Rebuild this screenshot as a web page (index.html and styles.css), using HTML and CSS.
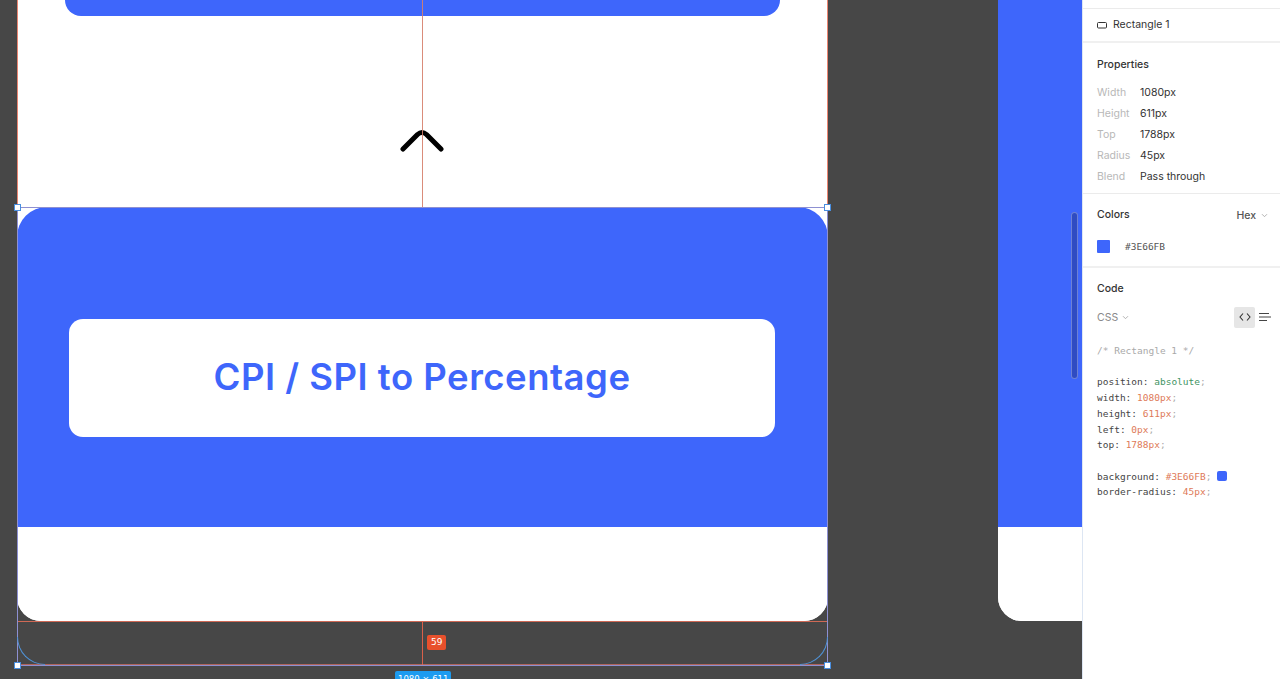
FILE: index.html
```html
<!DOCTYPE html>
<html lang="en">
<head>
<meta charset="utf-8">
<title>CPI / SPI to Percentage – Inspect</title>
<link rel="stylesheet" href="styles.css">
</head>
<body>
<div class="app">
  <main class="canvas">
    <section class="frame">
      <div class="top-btn"></div>
      <div class="chevron-zone">
        <svg class="chevron" width="50" height="30" viewBox="0 0 50 30"><path d="M6 21 L20.5 6.5 Q25 2.5 29.5 6.5 L44 21" fill="none" stroke="#000" stroke-width="5" stroke-linecap="round" stroke-linejoin="round"/></svg>
      </div>
      <div class="hero">
        <div class="hero-card"><h1 class="hero-title">CPI / SPI to Percentage</h1></div>
      </div>
      <div class="frame-rest"></div>
    </section>

    <section class="frame frame-two">
      <div class="frame-two-blue"></div>
      <div class="frame-rest"></div>
    </section>

    <div class="frame-outline"></div>
    <div class="guide-v guide-top"></div>
    <div class="guide-v guide-bottom"></div>
    <div class="guide-h"></div>
    <div class="selection"></div>
    <div class="arc arc-left"></div>
    <div class="arc arc-right"></div>
    <span class="handle h-tl"></span>
    <span class="handle h-tr"></span>
    <span class="handle h-bl"></span>
    <span class="handle h-br"></span>
    <span class="badge-measure">59</span>
    <span class="badge-size">1080 × 611</span>
    <div class="scrollbar"></div>
  </main>

  <aside class="panel">
    <div class="panel-cap"></div>
    <div class="layer-row">
      <svg width="10" height="8" viewBox="0 0 10 8"><rect x="0.5" y="1.5" width="9" height="5.5" rx="1" fill="none" stroke="#333" stroke-width="1"/></svg>
      <span>Rectangle 1</span>
    </div>

    <div class="section props">
      <div class="sec-title">Properties</div>
      <div class="prop"><span class="k">Width</span><span class="v">1080px</span></div>
      <div class="prop"><span class="k">Height</span><span class="v">611px</span></div>
      <div class="prop"><span class="k">Top</span><span class="v">1788px</span></div>
      <div class="prop"><span class="k">Radius</span><span class="v">45px</span></div>
      <div class="prop"><span class="k">Blend</span><span class="v">Pass through</span></div>
    </div>

    <div class="section colors">
      <div class="sec-head">
        <span class="sec-title">Colors</span>
        <span class="hex-pick">Hex <svg width="7" height="5" viewBox="0 0 7 5"><path d="M1 1.2 L3.5 3.7 L6 1.2" fill="none" stroke="#aaa" stroke-width="0.9"/></svg></span>
      </div>
      <div class="color-row"><span class="swatch"></span><span class="mono">#3E66FB</span></div>
    </div>

    <div class="section code">
      <div class="sec-title">Code</div>
      <div class="code-bar">
        <span class="lang">CSS <svg width="7" height="5" viewBox="0 0 7 5"><path d="M1 1.2 L3.5 3.7 L6 1.2" fill="none" stroke="#aaa" stroke-width="0.9"/></svg></span>
        <span class="code-tools">
          <span class="tool-btn"><svg width="12" height="10" viewBox="0 0 12 10"><path d="M4 1.5 L1 5 L4 8.5 M8 1.5 L11 5 L8 8.5" fill="none" stroke="#333" stroke-width="1.1"/></svg></span>
          <span class="tool-lines"><svg width="12" height="10" viewBox="0 0 12 10"><path d="M0 1.5 H10 M0 5 H12 M0 8.5 H8" stroke="#444" stroke-width="1"/></svg></span>
        </span>
      </div>
      <pre class="code-block"><span class="c-com">/* Rectangle 1 */</span>

<span class="c-k">position</span>: <span class="c-s">absolute</span><span class="c-p">;</span>
<span class="c-k">width</span>: <span class="c-n">1080px</span><span class="c-p">;</span>
<span class="c-k">height</span>: <span class="c-n">611px</span><span class="c-p">;</span>
<span class="c-k">left</span>: <span class="c-n">0px</span><span class="c-p">;</span>
<span class="c-k">top</span>: <span class="c-n">1788px</span><span class="c-p">;</span>

<span class="c-k">background</span>: <span class="c-n">#3E66FB</span><span class="c-p">;</span> <span class="mini-swatch"></span>
<span class="c-k">border-radius</span>: <span class="c-n">45px</span><span class="c-p">;</span></pre>
    </div>
  </aside>
</div>
</body>
</html>
```

FILE: styles.css
```css
* { box-sizing: border-box; }
html, body { margin: 0; padding: 0; }
body {
  width: 1280px;
  height: 679px;
  overflow: hidden;
  background: #474747;
  font-family: Inter, "Noto Sans", Arial, sans-serif;
}
.app {
  display: flex;
  width: 1280px;
  height: 679px;
}

/* ---------- canvas ---------- */
.canvas {
  position: relative;
  flex: 0 0 1082px;
  height: 679px;
  background: #474747;
  overflow: hidden;
}
.frame {
  position: absolute;
  left: 17px;
  top: 0;
  width: 811px;
  height: 621px;
  display: flex;
  flex-direction: column;
  background: #fff;
  border-radius: 0 0 24px 24px;
  overflow: hidden;
}
.top-btn {
  flex: 0 0 16px;
  margin: 0 48px 0 48px;
  background: #3E66FB;
  border-radius: 0 0 17px 17px;
}
.chevron-zone {
  flex: 0 0 191px;
  display: flex;
  justify-content: center;
  padding-top: 112px;
}
.chevron { display: block; margin-left: -1px; }
.hero {
  flex: 0 0 320px;
  background: #3E66FB;
  border-radius: 30px 30px 0 0;
  padding: 112px 53px 0 52px;
}
.hero-card {
  height: 118px;
  background: #fff;
  border-radius: 14px;
  display: flex;
  align-items: center;
  justify-content: center;
}
.hero-title {
  margin: 0 0 3px 0;
  font-family: Inter, "Noto Sans", sans-serif;
  font-weight: 600;
  font-size: 36.5px;
  letter-spacing: 0.5px;
  color: #3E66FB;
}
.frame-rest { flex: 1 1 auto; background: #fff; }

.frame-two {
  left: 998px;
  width: 160px;
  border-radius: 0 0 24px 24px;
}
.frame-two-blue { flex: 0 0 527px; background: #3E66FB; }

/* overlays */
.frame-outline {
  position: absolute;
  left: 17px;
  top: -2px;
  width: 811px;
  height: 624px;
  border: 1px solid rgba(232, 112, 88, 0.85);
  pointer-events: none;
}
.guide-v {
  position: absolute;
  left: 422px;
  width: 1px;
  background: rgba(214, 128, 108, 0.9);
}
.guide-top { top: 0; height: 207px; }
.guide-bottom { top: 621px; height: 44px; background: #d9604a; }
.guide-h {
  position: absolute;
  left: 17px;
  top: 664px;
  width: 811px;
  height: 1px;
  background: rgba(210, 110, 96, 0.75);
}
.selection {
  position: absolute;
  left: 17px;
  top: 207px;
  width: 811px;
  height: 459px;
  border: 1px solid #8e90d2;
}
.arc {
  position: absolute;
  top: 637px;
  width: 28px;
  height: 28px;
  border-bottom: 1px solid #4f92d6;
}
.arc-left { left: 17px; border-left: 1px solid #4f92d6; border-bottom-left-radius: 28px; }
.arc-right { left: 800px; border-right: 1px solid #4f92d6; border-bottom-right-radius: 28px; }
.handle {
  position: absolute;
  width: 7px;
  height: 7px;
  background: #fff;
  border: 1px solid #4a8fe0;
}
.h-tl { left: 14px; top: 204px; }
.h-tr { left: 824px; top: 204px; }
.h-bl { left: 14px; top: 662px; }
.h-br { left: 824px; top: 662px; }
.badge-measure {
  position: absolute;
  left: 427px;
  top: 635px;
  height: 15px;
  padding: 0 4px;
  background: #e8502c;
  border-radius: 2px;
  color: #fff;
  font-family: "DejaVu Sans", sans-serif;
  font-size: 9px;
  line-height: 15px;
}
.badge-size {
  position: absolute;
  left: 395px;
  top: 671px;
  height: 16px;
  padding: 0 3px;
  background: #1d9bf0;
  border-radius: 2px;
  color: #fff;
  font-family: "DejaVu Sans", sans-serif;
  font-size: 8.5px;
  line-height: 16px;
  white-space: nowrap;
}
.scrollbar {
  position: absolute;
  left: 1071px;
  top: 212px;
  width: 7px;
  height: 167px;
  border-radius: 4px;
  background: rgba(20, 30, 90, 0.35);
  border: 1px solid rgba(255, 255, 255, 0.3);
}

/* ---------- panel ---------- */
.panel {
  flex: 0 0 198px;
  height: 679px;
  background: #fff;
  border-left: 1px solid #dde6f3;
  color: #333;
  font-size: 10.5px;
  display: flex;
  flex-direction: column;
}
.panel-cap { flex: 0 0 9px; border-bottom: 1px solid #ebebeb; }
.layer-row {
  flex: 0 0 34px;
  display: flex;
  align-items: center;
  gap: 6px;
  padding: 0 0 1px 14px;
  border-bottom: 2px solid #f0f0f0;
  color: #333;
}
.layer-row svg { display: block; }
.section {
  padding: 13px 12px 0 14px;
  border-bottom: 1px solid #ebebeb;
}
.sec-title {
  display: block;
  font-weight: 500;
  line-height: 16px;
  color: #333;
}
.props { flex: 0 0 151px; padding-top: 14px; }
.props .sec-title { margin-bottom: 9px; }
.prop { display: flex; line-height: 21px; }
.prop .k { width: 43px; color: #b8b8b8; }
.prop .v { color: #333; }

.colors { flex: 0 0 74px; padding-top: 13px; border-bottom: 2px solid #f0f0f0; }
.sec-head { display: flex; justify-content: space-between; align-items: center; }
.hex-pick { display: flex; align-items: center; gap: 5px; color: #555; font-weight: 500; padding-right: 0; }
.color-row {
  display: flex;
  align-items: center;
  gap: 15px;
  margin-top: 13px;
  height: 21px;
}
.swatch { width: 13px; height: 13px; background: #3E66FB; border-radius: 1px; }
.mono { font-family: "DejaVu Sans Mono", monospace; font-size: 9.5px; color: #555; }

.code { flex: 1 1 auto; border-bottom: 0; padding-top: 13px; }
.code-bar {
  display: flex;
  justify-content: space-between;
  align-items: center;
  margin-top: 9px;
  height: 22px;
}
.lang { display: flex; align-items: center; gap: 4px; color: #8a8a8a; }
.code-tools { display: flex; align-items: center; gap: 4px; margin-right: -3px; }
.tool-btn {
  width: 21px;
  height: 21px;
  display: flex;
  align-items: center;
  justify-content: center;
  background: #e6e6e6;
  border-radius: 2px;
}
.tool-lines { display: flex; width: 12px; }
.tool-btn svg, .tool-lines svg { display: block; }
.code-block {
  margin: 15px 0 0 0;
  font-family: "DejaVu Sans Mono", monospace;
  font-size: 9.5px;
  line-height: 15.7px;
  color: #444;
}
.c-com { color: #a9a9a9; }
.c-k { color: #444; }
.c-s { color: #3f9463; }
.c-n { color: #de7a58; }
.c-p { color: #aaa; }
.mini-swatch {
  display: inline-block;
  width: 10px;
  height: 10px;
  background: #3E66FB;
  border-radius: 2px;
  vertical-align: -1px;
}
```
